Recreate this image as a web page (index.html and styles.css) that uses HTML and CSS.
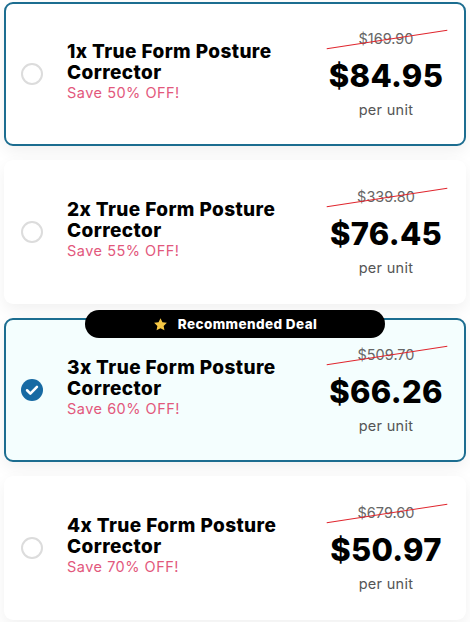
FILE: index.html
```html
<!DOCTYPE html>
<html lang="en">
<head>
  <meta charset="UTF-8" />
  <meta name="viewport" content="width=device-width, initial-scale=1" />
  <title>Bundle Offers</title>
  <link rel="stylesheet" href="styles.css">
</head>
<body>
  <div class="offers">

    <label class="offer selected-border">
      <span class="radio"></span>
      <div class="info">
        <div class="title">1x True Form Posture Corrector</div>
        <div class="save">Save 50% OFF!</div>
      </div>
      <div class="price">
        <div class="old">$169.90</div>
        <div class="now">$84.95</div>
        <div class="unit">per unit</div>
      </div>
    </label>

    <label class="offer">
      <span class="radio"></span>
      <div class="info">
        <div class="title">2x True Form Posture Corrector</div>
        <div class="save">Save 55% OFF!</div>
      </div>
      <div class="price">
        <div class="old">$339.80</div>
        <div class="now">$76.45</div>
        <div class="unit">per unit</div>
      </div>
    </label>

    <label class="offer selected-border active">
      <div class="badge">
        <svg class="star" viewBox="0 0 24 24" width="15" height="15"><path d="M12 1.8l3.1 6.6 7.1.9-5.2 4.9 1.3 7.1L12 17.8l-6.3 3.5 1.3-7.1-5.2-4.9 7.1-.9z" fill="#f6c744"/></svg>
        Recommended Deal
      </div>
      <span class="radio checked">
        <svg viewBox="0 0 24 24" width="22" height="22"><circle cx="12" cy="12" r="12" fill="#176aa3"/><path d="M6.6 12.3l3.6 3.6 7.2-7.3" fill="none" stroke="#fff" stroke-width="2.8" stroke-linecap="round" stroke-linejoin="round"/></svg>
      </span>
      <div class="info">
        <div class="title">3x True Form Posture Corrector</div>
        <div class="save">Save 60% OFF!</div>
      </div>
      <div class="price">
        <div class="old">$509.70</div>
        <div class="now">$66.26</div>
        <div class="unit">per unit</div>
      </div>
    </label>

    <label class="offer">
      <span class="radio"></span>
      <div class="info">
        <div class="title">4x True Form Posture Corrector</div>
        <div class="save">Save 70% OFF!</div>
      </div>
      <div class="price">
        <div class="old">$679.60</div>
        <div class="now">$50.97</div>
        <div class="unit">per unit</div>
      </div>
    </label>

  </div>
</body>
</html>
```

FILE: styles.css
```css
* {
  box-sizing: border-box;
  font-family: 'Inter', 'Open Sans', sans-serif;
}

body {
  background-color: #ffffff;
  color: #000;
  margin: 0;
  padding: 2px 4px;
}

.offers {
  display: flex;
  flex-direction: column;
  gap: 14px;
}

.offer {
  position: relative;
  display: flex;
  align-items: center;
  height: 144px;
  padding: 0 16px 0 15px;
  background-color: #fff;
  border: 2px solid transparent;
  border-radius: 9px;
  box-shadow: 0 6px 16px rgba(0, 0, 0, 0.06);
}

.offer.selected-border {
  border-color: #1c6d90;
}

.offer.active {
  background-color: #f4fefe;
}

.radio {
  flex: none;
  width: 22px;
  height: 22px;
  border: 2px solid #dcdcdc;
  border-radius: 50%;
  margin-right: 24px;
}

.radio.checked {
  border: none;
}

.radio svg {
  display: block;
}

.info {
  flex: 1;
  padding-bottom: 6px;
}

.title {
  font-size: 19px;
  font-weight: 800;
  line-height: 21px;
  letter-spacing: 0.4px;
  max-width: 240px;
}

.save {
  font-size: 14.5px;
  letter-spacing: 0.5px;
  color: #e2587c;
  margin-top: 1px;
}

.price {
  flex: none;
  width: 124px;
  text-align: center;
}

.old {
  position: relative;
  font-size: 14.5px;
  color: #666;
  line-height: 18px;
}

.old::after {
  content: '';
  position: absolute;
  left: 2px;
  right: 0;
  top: 9px;
  height: 1px;
  background-color: #e0262e;
  transform: rotate(-8.8deg);
}

.now {
  font-size: 31px;
  font-weight: 800;
  line-height: 36px;
  margin-top: 10px;
  letter-spacing: 0.3px;
}

.unit {
  font-size: 14.5px;
  letter-spacing: 0.3px;
  color: #555;
  margin-top: 7px;
}

.badge {
  position: absolute;
  top: -10px;
  left: 50%;
  transform: translateX(-50%);
  width: 300px;
  height: 28px;
  display: flex;
  align-items: center;
  justify-content: center;
  gap: 10px;
  background-color: #000;
  color: #fff;
  font-size: 13.5px;
  font-weight: 800;
  letter-spacing: 0.4px;
  border-radius: 14px;
}
```
